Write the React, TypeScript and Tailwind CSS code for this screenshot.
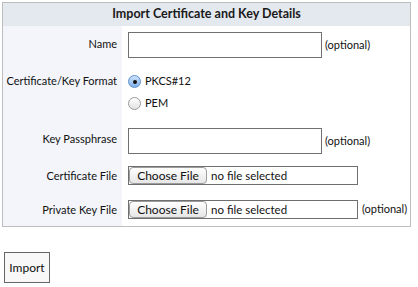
import React from "react";

const font = { fontFamily: "Lato, 'DejaVu Sans', sans-serif" };

function Radio({ checked }: { checked?: boolean }) {
  return checked ? (
    <span className="relative inline-flex h-[13px] w-[13px] items-center justify-center rounded-full border border-[#5a8fd0] bg-gradient-to-b from-[#cfe3fb] to-[#7fb1ea]">
      <span className="h-[4px] w-[4px] rounded-full bg-[#111]" />
    </span>
  ) : (
    <span className="inline-block h-[13px] w-[13px] rounded-full border border-[#9a9a9a] bg-gradient-to-b from-[#ffffff] to-[#e2e2e2]" />
  );
}

function FileInput() {
  return (
    <div className="flex h-[19px] w-[230px] items-center border border-[#6f6f6f] bg-white">
      <div className="flex h-[17px] w-[78px] items-center justify-center rounded-[4px] border border-[#9c9c9c] bg-gradient-to-b from-[#ffffff] to-[#e6e6e6] text-[12px] text-[#111]">
        Choose File
      </div>
      <span className="ml-[4px] text-[11.5px] text-[#111]">no file selected</span>
    </div>
  );
}

export default function App() {
  return (
    <div className="h-[287px] w-[418px] bg-white text-[11px] text-[#111]" style={font}>
      <div className="pl-[2px] pt-[2px]">
        <div className="w-[409px] border border-[#bdbdbd]">
          <div className="flex h-[23px] items-center justify-center bg-[#e4e8ef] text-[12.5px] font-bold text-[#1a1a1a]">
            Import Certificate and Key Details
          </div>
          <div className="flex">
            <div className="w-[119px] shrink-0 whitespace-nowrap bg-[#f3f5fa] pr-[5px] text-right">
              <div className="flex h-[38px] items-start justify-end pt-[6px]">
                <div className="flex h-[24px] items-center">Name</div>
              </div>
              <div className="flex h-[58px] items-start justify-end pt-[11px]">
                <div className="flex h-[13px] items-center">Certificate/Key Format</div>
              </div>
              <div className="flex h-[38px] items-start justify-end pt-[6px]">
                <div className="flex h-[22px] items-center">Key Passphrase</div>
              </div>
              <div className="flex h-[34px] items-start justify-end pt-[6px]">
                <div className="flex h-[20px] items-center">Certificate File</div>
              </div>
              <div className="flex h-[32px] items-start justify-end pt-[6px]">
                <div className="flex h-[20px] items-center">Private Key File</div>
              </div>
            </div>
            <div className="flex-1 bg-white pl-[6px]">
              <div className="flex h-[38px] items-start pt-[6px]">
                <div className="h-[26px] w-[194px] border border-[#707070] bg-white" />
                <span className="ml-[3px] flex h-[27px] items-center">(optional)</span>
              </div>
              <div className="flex h-[58px] flex-col pt-[11px]">
                <div className="flex h-[13px] items-center">
                  <Radio checked />
                  <span className="ml-[4px]">PKCS#12</span>
                </div>
                <div className="mt-[9px] flex h-[13px] items-center">
                  <Radio />
                  <span className="ml-[4px]">PEM</span>
                </div>
              </div>
              <div className="flex h-[38px] items-start pt-[6px]">
                <div className="h-[26px] w-[194px] border border-[#707070] bg-white" />
                <span className="ml-[3px] flex h-[27px] items-center">(optional)</span>
              </div>
              <div className="flex h-[34px] items-start pt-[6px]">
                <FileInput />
              </div>
              <div className="flex h-[32px] items-start pt-[6px]">
                <FileInput />
                <span className="ml-[4px] flex h-[19px] items-center">(optional)</span>
              </div>
            </div>
          </div>
        </div>
      </div>
      <div className="pl-[4px] pt-[25px]">
        <button className="flex h-[31px] w-[46px] items-center justify-center border border-[#666] bg-[#f8f8f8] text-[12px] text-[#111]">
          Import
        </button>
      </div>
    </div>
  );
}
